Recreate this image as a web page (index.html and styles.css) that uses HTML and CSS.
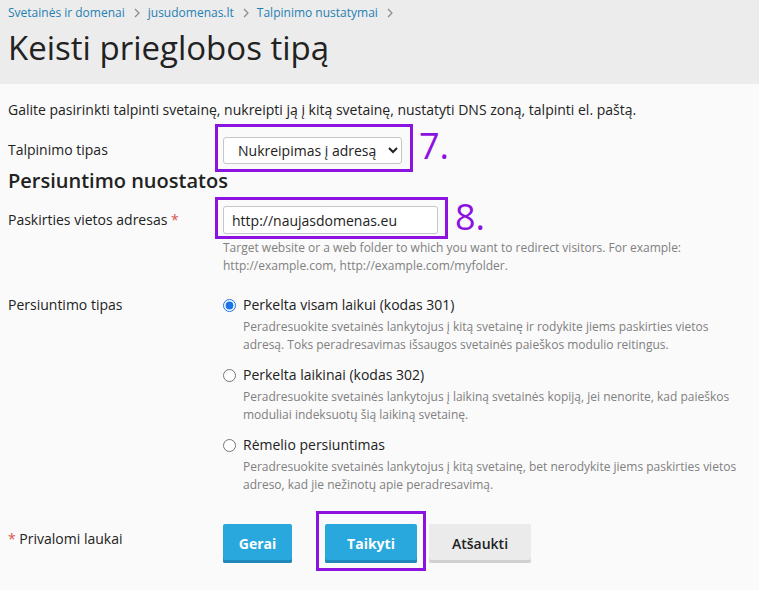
FILE: index.html
```html
<!DOCTYPE html>
<html lang="lt">
<head>
<meta charset="utf-8">
<title>Keisti prieglobos tipą</title>
<link rel="stylesheet" href="styles.css">
</head>
<body>
<header class="page-header">
  <nav class="breadcrumbs">
    <a href="#">Svetainės ir domenai</a><svg class="sep" width="6" height="10" viewBox="0 0 6 10"><path d="M1 1l4 4-4 4" fill="none" stroke="#8a8a8a" stroke-width="1.2"/></svg>
    <a href="#">jusudomenas.lt</a><svg class="sep" width="6" height="10" viewBox="0 0 6 10"><path d="M1 1l4 4-4 4" fill="none" stroke="#8a8a8a" stroke-width="1.2"/></svg>
    <a href="#">Talpinimo nustatymai</a><svg class="sep" width="6" height="10" viewBox="0 0 6 10"><path d="M1 1l4 4-4 4" fill="none" stroke="#8a8a8a" stroke-width="1.2"/></svg>
  </nav>
  <h1 class="title">Keisti prieglobos tipą</h1>
</header>
<main class="content">
  <p class="intro">Galite pasirinkti talpinti svetainę, nukreipti ją į kitą svetainę, nustatyti DNS zoną, talpinti el. paštą.</p>

  <div class="row row-select">
    <label class="label">Talpinimo tipas</label>
    <div class="field">
      <span class="annot">
        <select class="select"><option>Nukreipimas į adresą</option></select>
        <span class="annot-box box-7"></span>
        <span class="annot-num num-7">7.</span>
      </span>
    </div>
  </div>

  <h2 class="section-title">Persiuntimo nuostatos</h2>

  <div class="row row-input">
    <label class="label">Paskirties vietos adresas <span class="req">*</span></label>
    <div class="field">
      <span class="annot">
        <input class="input" type="text" value="http://naujasdomenas.eu">
        <span class="annot-box box-8"></span>
        <span class="annot-num num-8">8.</span>
      </span>
      <div class="hint">Target website or a web folder to which you want to redirect visitors. For example: http://example.com, http://example.com/myfolder.</div>
    </div>
  </div>

  <div class="row row-radio">
    <label class="label">Persiuntimo tipas</label>
    <div class="field radios">
      <div class="radio">
        <label class="radio-label"><input type="radio" name="t" checked> Perkelta visam laikui (kodas 301)</label>
        <div class="radio-desc">Peradresuokite svetainės lankytojus į kitą svetainę ir rodykite jiems paskirties vietos adresą. Toks peradresavimas išsaugos svetainės paieškos modulio reitingus.</div>
      </div>
      <div class="radio">
        <label class="radio-label"><input type="radio" name="t"> Perkelta laikinai (kodas 302)</label>
        <div class="radio-desc">Peradresuokite svetainės lankytojus į laikiną svetainės kopiją, jei nenorite, kad paieškos moduliai indeksuotų šią laikiną svetainę.</div>
      </div>
      <div class="radio">
        <label class="radio-label"><input type="radio" name="t"> Rėmelio persiuntimas</label>
        <div class="radio-desc">Peradresuokite svetainės lankytojus į kitą svetainę, bet nerodykite jiems paskirties vietos adreso, kad jie nežinotų apie peradresavimą.</div>
      </div>
    </div>
  </div>

  <div class="row row-buttons">
    <div class="label"><span class="req">*</span> Privalomi laukai</div>
    <div class="field buttons">
      <button class="btn btn-primary">Gerai</button>
      <span class="annot annot-btn">
        <button class="btn btn-primary">Taikyti</button>
        <span class="annot-box box-btn"></span>
      </span>
      <button class="btn btn-secondary">Atšaukti</button>
    </div>
  </div>
</main>
</body>
</html>
```

FILE: styles.css
```css
* { box-sizing: border-box; }
html, body { margin: 0; padding: 0; }
body {
  font-family: "Open Sans", "Noto Sans", sans-serif;
  font-size: 14px;
  color: #222;
  background: #fafafa;
  width: 759px;
  height: 590px;
  overflow: hidden;
}
.page-header {
  background: #ececec;
  height: 84px;
  padding: 5px 8px 0;
}
.breadcrumbs {
  font-size: 12px;
  line-height: 16px;
  display: flex;
  align-items: center;
}
.breadcrumbs a { color: #1f7fb3; text-decoration: none; }
.breadcrumbs .sep { margin: 0 8px 0 9px; }
.title {
  margin: 5px 0 0;
  font-size: 33px;
  font-weight: 400;
  line-height: 44px;
  color: #222;
}
.content { padding: 0 8px; }
.intro { margin: 0; padding-top: 16px; line-height: 20px; }
.row { display: grid; grid-template-columns: 215px 1fr; }
.label { line-height: 20px; color: #222; }
.req { color: #d9534f; }
.row-select { margin-top: 17px; }
.row-select .label { padding-top: 3px; }
.annot { position: relative; display: inline-block; vertical-align: top; }
.select {
  font-family: "Open Sans", sans-serif;
  font-size: 14px;
  color: #222;
  height: 27px;
  width: 179px;
  padding: 0 2px 0 10px;
  border: 1px solid #c6c6c6;
  border-radius: 3px;
  background: #fff;
  display: block;
}
.annot-box {
  position: absolute;
  border: 3px solid #8c12df;
  pointer-events: none;
}
.box-7 { left: -8px; top: -13px; right: -11px; bottom: -8px; }
.annot-num {
  position: absolute;
  color: #8c12df;
  font-size: 36px;
  line-height: 30px;
  font-family: "Open Sans", sans-serif;
}
.num-7 { left: 196px; top: -6px; }
.section-title {
  margin: 4px 0 0;
  font-size: 20px;
  font-weight: 600;
  line-height: 26px;
  color: #222;
}
.row-input { margin-top: 12px; }
.row-input .label { padding-top: 4px; }
.input {
  font-family: "Open Sans", sans-serif;
  font-size: 14px;
  color: #222;
  width: 215px;
  height: 28px;
  padding: 0 8px;
  border: 1px solid #c6c6c6;
  border-radius: 3px;
  background: #fff;
  display: block;
}
.box-8 { left: -8px; top: -9px; right: -10px; bottom: -5px; }
.num-8 { left: 232px; top: -4px; }
.hint {
  font-size: 12px;
  line-height: 18px;
  color: #808080;
  margin-top: 5px;
  max-width: 480px;
}
.row-radio { margin-top: 20px; }
.radios { display: flex; flex-direction: column; gap: 11px; }
.radio-label {
  display: flex;
  align-items: center;
  line-height: 20px;
  color: #222;
}
.radio-label input {
  margin: 0 7px 0 0;
  width: 13px;
  height: 13px;
  accent-color: #1a73e8;
}
.radio-desc {
  font-size: 12px;
  line-height: 18px;
  color: #808080;
  padding-left: 20px;
  margin-top: 3px;
  max-width: 522px;
}
.row-buttons { margin-top: 30px; }
.row-buttons .label { padding-top: 5px; }
.buttons { display: flex; align-items: flex-start; gap: 13px; }
.btn {
  font-family: "Open Sans", sans-serif;
  font-size: 14px;
  font-weight: 700;
  height: 39px;
  border: 0;
  border-radius: 2px;
  padding: 0;
  cursor: pointer;
}
.btn-primary {
  background: #28a8dc;
  color: #fff;
  box-shadow: inset 0 -3px 0 #1e88b8;
}
.btn-secondary {
  background: #ebebeb;
  color: #222;
  font-weight: 600;
  box-shadow: inset 0 -3px 0 #d0d0d0;
}
.annot-btn .btn { display: block; width: 92px; }
.buttons > .btn-primary { width: 69px; }
.buttons > .btn-secondary { width: 102px; margin-left: -1px; }
.box-btn { left: -9px; top: -13px; right: -9px; bottom: -8px; }
.annot-btn { margin-left: 20px; }
```
